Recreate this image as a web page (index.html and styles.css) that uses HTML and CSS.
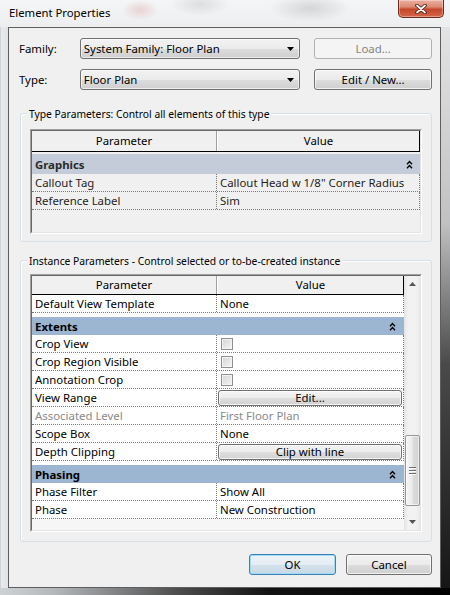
FILE: index.html
```html
<!DOCTYPE html>
<html>
<head>
<meta charset="utf-8">
<link rel="stylesheet" href="styles.css">
</head>
<body>
<div class="window">
  <div class="titlebar">
    <span class="title">Element Properties</span>
    <div class="close">
      <svg width="12" height="10" viewBox="0 0 12 10"><path d="M2 1.5 L10 8.5 M10 1.5 L2 8.5" stroke="#4a1f16" stroke-width="3.6" stroke-linecap="round"/><path d="M2 1.5 L10 8.5 M10 1.5 L2 8.5" stroke="#fff" stroke-width="1.8" stroke-linecap="round"/></svg>
    </div>
  </div>
  <div class="body">
    <div class="frame-left"></div>
    <div class="client">
      <div class="form-row">
        <span class="lbl">Family:</span>
        <div class="combo"><span>System Family: Floor Plan</span><svg width="7" height="4" viewBox="0 0 7 4"><path d="M0 0 H7 L3.5 4 Z" fill="#000"/></svg></div>
        <div class="btn disabled load">Load...</div>
      </div>
      <div class="form-row second">
        <span class="lbl">Type:</span>
        <div class="combo"><span>Floor Plan</span><svg width="7" height="4" viewBox="0 0 7 4"><path d="M0 0 H7 L3.5 4 Z" fill="#000"/></svg></div>
        <div class="btn load">Edit / New...</div>
      </div>

      <div class="group type-group">
        <div class="group-title">Type Parameters: Control all elements of this type</div>
        <div class="grid type-grid">
          <div class="grid-in">
            <div class="grid-main">
              <div class="hdr"><div class="c1">Parameter</div><div class="c2">Value</div></div>
              <div class="cat"><div class="band"><span>Graphics</span><svg width="7" height="9" viewBox="0 0 7 9"><path d="M1 4.2 L3.5 1.5 L6 4.2 M1 8.2 L3.5 5.5 L6 8.2" stroke="#000" stroke-width="1.3" fill="none"/></svg></div></div>
              <div class="row"><div class="c1">Callout Tag</div><div class="c2">Callout Head w 1/8" Corner Radius</div></div>
              <div class="row"><div class="c1">Reference Label</div><div class="c2">Sim</div></div>
            </div>
          </div>
        </div>
      </div>

      <div class="group inst-group">
        <div class="group-title">Instance Parameters - Control selected or to-be-created instance</div>
        <div class="grid inst-grid">
          <div class="grid-in">
            <div class="grid-main">
              <div class="hdr"><div class="c1">Parameter</div><div class="c2">Value</div></div>
              <div class="row"><div class="c1">Default View Template</div><div class="c2">None</div></div>
              <div class="cat"><div class="band"><span>Extents</span><svg width="7" height="9" viewBox="0 0 7 9"><path d="M1 4.2 L3.5 1.5 L6 4.2 M1 8.2 L3.5 5.5 L6 8.2" stroke="#000" stroke-width="1.3" fill="none"/></svg></div></div>
              <div class="row"><div class="c1">Crop View</div><div class="c2"><span class="check"></span></div></div>
              <div class="row"><div class="c1">Crop Region Visible</div><div class="c2"><span class="check"></span></div></div>
              <div class="row"><div class="c1">Annotation Crop</div><div class="c2"><span class="check"></span></div></div>
              <div class="row"><div class="c1">View Range</div><div class="c2 has-btn"><div class="cell-btn">Edit...</div></div></div>
              <div class="row muted"><div class="c1">Associated Level</div><div class="c2">First Floor Plan</div></div>
              <div class="row"><div class="c1">Scope Box</div><div class="c2">None</div></div>
              <div class="row"><div class="c1">Depth Clipping</div><div class="c2 has-btn"><div class="cell-btn">Clip with line</div></div></div>
              <div class="cat"><div class="band"><span>Phasing</span><svg width="7" height="9" viewBox="0 0 7 9"><path d="M1 4.2 L3.5 1.5 L6 4.2 M1 8.2 L3.5 5.5 L6 8.2" stroke="#000" stroke-width="1.3" fill="none"/></svg></div></div>
              <div class="row"><div class="c1">Phase Filter</div><div class="c2">Show All</div></div>
              <div class="row"><div class="c1">Phase</div><div class="c2">New Construction</div></div>
            </div>
            <div class="vscroll">
              <div class="sb-btn"><svg width="7" height="4" viewBox="0 0 7 4"><path d="M0 4 H7 L3.5 0 Z" fill="#555"/></svg></div>
              <div class="sb-thumb"><span></span><span></span><span></span></div>
              <div class="sb-fill"></div>
              <div class="sb-btn"><svg width="7" height="4" viewBox="0 0 7 4"><path d="M0 0 H7 L3.5 4 Z" fill="#555"/></svg></div>
            </div>
          </div>
        </div>
      </div>

      <div class="actions">
        <div class="btn default">OK</div>
        <div class="btn cancel">Cancel</div>
      </div>
    </div>
    <div class="frame-right"></div>
  </div>
  <div class="frame-bottom"></div>
</div>
</body>
</html>
```

FILE: styles.css
```css
* { box-sizing: border-box; margin: 0; padding: 0; }
html, body { width: 450px; height: 595px; overflow: hidden; }
body {
  font-family: "Noto Sans", "Open Sans", "DejaVu Sans", sans-serif;
  font-size: 11.4px;
  color: #000;
  background: #1a1a1a;
}
.window {
  width: 450px;
  height: 595px;
  display: flex;
  flex-direction: column;
  background: linear-gradient(to bottom, #f1f2f3 0%, #e4e7ea 100%);
}
.titlebar {
  height: 27px;
  display: flex;
  justify-content: space-between;
  align-items: flex-start;
  padding-left: 9px;
  background:
    radial-gradient(ellipse 18px 10px at 140px 10px, rgba(220,150,150,.35), rgba(220,150,150,0)),
    radial-gradient(ellipse 40px 14px at 310px 8px, rgba(160,160,160,.35), rgba(160,160,160,0)),
    radial-gradient(ellipse 30px 12px at 200px 4px, rgba(170,170,170,.3), rgba(170,170,170,0)),
    linear-gradient(to bottom, #f4f5f6, #eceef0);
}
.title { line-height: 25px; font-size: 11.3px; color: #000; }
.close {
  width: 46px;
  height: 18px;
  margin-right: 6px;
  border: 1px solid #6b2a1c;
  border-top: none;
  border-radius: 0 0 5px 5px;
  background: linear-gradient(to bottom, #eab0a0 0%, #dc8a73 40%, #c5472b 55%, #d5664a 100%);
  box-shadow: inset 0 0 0 1px rgba(255,255,255,.35);
  display: flex;
  align-items: center;
  justify-content: center;
}
.body { flex: 1; display: flex; }
.frame-left {
  width: 8px;
  background: linear-gradient(to right, #b9bcbf 0, #e7e9eb 1px, #e1e4e7 100%);
}
.client {
  width: 433px;
  height: 561px;
  background: #f0f0f0;
  border: 1px solid #5e5e5e;
  padding: 10px 8px 0 10px;
  display: flex;
  flex-direction: column;
}
.frame-right {
  flex: 1;
  background: linear-gradient(to bottom, #e1e3e5 0%, #bfc1c3 35%, #4a4a4a 60%, #161616 100%);
}
.frame-bottom {
  height: 7px;
  background: linear-gradient(to right, #cfd2d5 0%, #b5b8bb 12%, #4b4b4b 40%, #121212 60%, #000 100%);
}

/* top form */
.form-row { display: flex; align-items: center; height: 21px; }
.form-row.second { margin-top: 10px; }
.lbl { width: 61px; color: #000; }
.combo {
  width: 221px;
  height: 21px;
  border: 1px solid #707070;
  border-radius: 3px;
  background: linear-gradient(to bottom, #f2f2f2 0%, #ebebeb 50%, #dddddd 51%, #cfcfcf 100%);
  box-shadow: inset 0 0 0 1px rgba(255,255,255,.6);
  display: flex;
  align-items: center;
  justify-content: space-between;
  padding: 0 5px 0 3px;
  line-height: 19px;
}
.btn {
  height: 21px;
  border: 1px solid #707070;
  border-radius: 3px;
  background: linear-gradient(to bottom, #f2f2f2 0%, #ebebeb 50%, #dddddd 51%, #cfcfcf 100%);
  box-shadow: inset 0 0 0 1px rgba(255,255,255,.7);
  display: flex;
  align-items: center;
  justify-content: center;
  line-height: 19px;
  color: #000;
}
.btn.load { width: 118px; margin-left: 14px; }
.btn.disabled {
  border-color: #adb2b5;
  background: #f4f4f4;
  box-shadow: none;
  color: #838383;
}

/* group boxes */
.group {
  width: 412px;
  margin-left: 1px;
  border: 1px solid #d5dfe5;
  border-radius: 3px;
  box-shadow: inset 1px 1px 0 #fff;
  display: flex;
  flex-direction: column;
}
.type-group { margin-top: 23px; height: 129px; }
.inst-group { margin-top: 18px; height: 282px; }
.group-title {
  align-self: flex-start;
  margin: -8px 0 0 6px;
  padding: 0 2px;
  line-height: 16px;
  font-size: 10.3px;
  background: #f0f0f0;
  color: #000;
}

/* grids */
.grid {
  margin: 0 9px;
  border: 1px solid;
  border-color: #a0a0a0 #ffffff #ffffff #a0a0a0;
}
.type-grid { margin-top: 7px; height: 105px; }
.inst-grid { margin-top: 5px; height: 258px; }
.grid-in {
  height: 100%;
  border: 1px solid;
  border-color: #696969 #e3e3e3 #e3e3e3 #696969;
  display: flex;
}
.grid-main { flex: 1; background: #f0f0f0; display: flex; flex-direction: column; }
.type-grid .grid-main { background: #f0f0f0; }
.inst-grid .grid-main { background: #f6f6f6; }

.hdr {
  display: flex;
  height: 21px;
  border-bottom: 1px solid #000;
  border-right: 1px solid #000;
  background: #f0f0f0;
  line-height: 20px;
  flex-shrink: 0;
}
.inst-grid .hdr { height: 19px; line-height: 18px; }
.hdr .c1 { width: 185px; text-align: center; border-right: 1px solid #a0a0a0; }
.hdr .c2 { flex: 1; text-align: center; border-left: 1px solid #fff; }

.row {
  display: flex;
  height: 18px;
  line-height: 17px;
  border-bottom: 1px dotted #7a7a7a;
  border-right: 1px dotted #7a7a7a;
  flex-shrink: 0;
}
.inst-grid .row { background: #fff; }
.type-grid .row { color: #1e1e1e; }
.row .c1 { width: 185px; padding-left: 3px; border-right: 1px dotted #7a7a7a; white-space: nowrap; overflow: hidden; }
.row .c2 { flex: 1; padding-left: 3px; white-space: nowrap; overflow: hidden; display: flex; align-items: center; }
.row.muted { color: #8a8a8a; }
.row .c2.has-btn { padding: 0 1px 0 1px; }

.cat { flex-shrink: 0; }
.type-grid .cat { padding-top: 2px; }
.inst-grid .cat { padding-top: 4px; background: #fff; }
.band {
  display: flex;
  align-items: center;
  justify-content: space-between;
  font-weight: bold;
  padding: 0 7px 0 3px;
}
.type-grid .band { height: 20px; background: #c3ccd8; color: #2a2a2a; }
.inst-grid .band { height: 18px; background: #9cb5d1; color: #000; padding-right: 8px; }

.check {
  width: 12px;
  height: 12px;
  margin-left: 1px;
  border: 1px solid #8f8f8f;
  background: linear-gradient(135deg, #d4d4d4 0%, #e8e8e8 60%, #f6f6f6 100%);
  box-shadow: inset 0 0 0 1px #f4f4f4;
}
.cell-btn {
  flex: 1;
  height: 16px;
  border: 1px solid #707070;
  border-radius: 3px;
  background: linear-gradient(to bottom, #f4f4f4 0%, #ececec 50%, #dedede 51%, #d2d2d2 100%);
  box-shadow: inset 0 0 0 1px rgba(255,255,255,.7);
  text-align: center;
  line-height: 14px;
  color: #000;
}

/* scrollbar */
.vscroll {
  width: 16px;
  display: flex;
  flex-direction: column;
  background: linear-gradient(to right, #e3e3e3 0%, #f2f2f2 25%, #f2f2f2 75%, #e8e8e8 100%);
}
.sb-btn { height: 16px; display: flex; align-items: center; justify-content: center; flex-shrink: 0; }
.sb-thumb {
  margin-top: 143px;
  height: 71px;
  margin-left: 1px;
  margin-right: 0;
  border: 1px solid #979797;
  border-radius: 2px;
  background: linear-gradient(to right, #f6f6f6 0%, #ececec 45%, #dcdcdc 55%, #d2d2d2 100%);
  box-shadow: inset 0 0 0 1px rgba(255,255,255,.6);
  display: flex;
  flex-direction: column;
  align-items: center;
  justify-content: center;
  gap: 2px;
  flex-shrink: 0;
}
.sb-thumb span { width: 7px; height: 1px; background: #6e6e6e; box-shadow: 0 1px 0 #fff; }
.sb-fill { flex: 1; }

/* bottom buttons */
.actions {
  display: flex;
  justify-content: flex-end;
  gap: 10px;
  margin-top: 12px;
}
.btn.default {
  width: 87px;
  border-color: #3c7fb1;
  box-shadow: inset 0 0 0 1px #9fdcf6;
  background: linear-gradient(to bottom, #eef4f8 0%, #e4edf3 50%, #d5e2eb 51%, #c8d8e4 100%);
}
.btn.cancel { width: 86px; }
```
